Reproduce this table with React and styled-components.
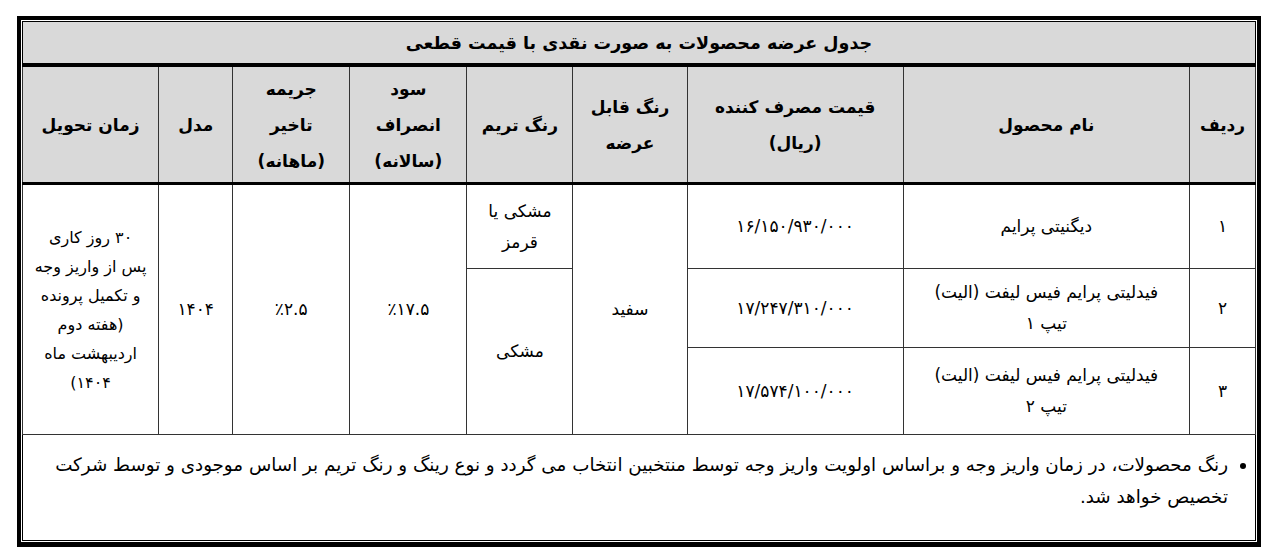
import React from 'react'
import styled, { createGlobalStyle } from 'styled-components'

const GlobalStyle = createGlobalStyle`
  html, body {
    margin: 0;
    padding: 0;
    background: #fff;
  }
  body {
    font-family: "DejaVu Sans", "Liberation Serif", serif;
    color: #000;
  }
`

const Page = styled.div`
  padding: 16px 19px 0 17px;
`

const Frame = styled.div`
  width: 1244px;
  box-sizing: border-box;
  border: 4px solid #000;
  border-bottom-width: 5px;
  padding: 1px;
  background: #fff;
`

const Table = styled.table`
  width: 100%;
  table-layout: fixed;
  border-collapse: collapse;
  border: 1px solid #000;
  direction: rtl;
`

const TitleCell = styled.th`
  height: 41px;
  padding: 0;
  background: #d9d9d9;
  border-bottom: 4px solid #000;
  font-size: 17.5px;
  font-weight: bold;
  text-align: center;
  vertical-align: middle;
`

const HeadCell = styled.th`
  height: 115px;
  padding: 0 4px;
  background: #d9d9d9;
  border: 1px solid #333;
  border-bottom: 3px solid #000;
  font-size: 17px;
  font-weight: bold;
  line-height: 36px;
  text-align: center;
  vertical-align: middle;
`

const Cell = styled.td`
  height: ${p => p.h || 'auto'};
  padding: 0 4px;
  border: 1px solid #333;
  font-size: ${p => p.fs || '17px'};
  line-height: ${p => p.lh || '31px'};
  text-align: center;
  vertical-align: middle;
`

const Num = styled.span`
  letter-spacing: 3px;
`

const NoteCell = styled.td`
  height: 91px;
  padding: 14px 6px 0 6px;
  border-top: 1px solid #333;
  vertical-align: top;
`

const NoteList = styled.ul`
  margin: 0;
  padding: 0 21px 0 0;
  list-style: disc;
  font-size: 18.3px;
  line-height: 32px;
  text-align: right;
`

const widths = [66, 286, 216, 114, 106, 117, 117, 74, 136]

const headers = [
  ['ردیف'],
  ['نام محصول'],
  ['قیمت مصرف کننده', '(ریال)'],
  ['رنگ قابل', 'عرضه'],
  ['رنگ تریم'],
  ['سود', 'انصراف', '(سالانه)'],
  ['جریمه', 'تاخیر', '(ماهانه)'],
  ['مدل'],
  ['زمان تحویل'],
]

const products = [
  { id: '۱', name: ['دیگنیتی پرایم'], price: '۱۶/۱۵۰/۹۳۰/۰۰۰', h: '83px' },
  { id: '۲', name: ['فیدلیتی پرایم فیس لیفت (الیت)', 'تیپ ۱'], price: '۱۷/۲۴۷/۳۱۰/۰۰۰', h: '78px' },
  { id: '۳', name: ['فیدلیتی پرایم فیس لیفت (الیت)', 'تیپ ۲'], price: '۱۷/۵۷۴/۱۰۰/۰۰۰', h: '86px' },
]

const delivery = ['۳۰ روز کاری', 'پس از واریز وجه', 'و تکمیل پرونده', '(هفته دوم', 'اردیبهشت ماه', '۱۴۰۴)']

const Lines = ({ lines }) => lines.map((line, idx) => (
  <React.Fragment key={idx}>
    {idx > 0 && <br />}
    {line}
  </React.Fragment>
))

const App = () => {
  return (
    <Page>
      <GlobalStyle />
      <Frame>
        <Table>
          <colgroup>
            {widths.map((w, idx) => <col key={idx} style={{ width: w }} />)}
          </colgroup>
          <thead>
            <tr>
              <TitleCell colSpan={9}>جدول عرضه محصولات به صورت نقدی با قیمت قطعی</TitleCell>
            </tr>
            <tr>
              {headers.map((h, idx) => (
                <HeadCell key={idx}><Lines lines={h} /></HeadCell>
              ))}
            </tr>
          </thead>
          <tbody>
            {products.map((p, idx) => (
              <tr key={p.id}>
                <Cell h={p.h}>{p.id}</Cell>
                <Cell><Lines lines={p.name} /></Cell>
                <Cell><Num>{p.price}</Num></Cell>
                {idx === 0 && <Cell rowSpan={3}>سفید</Cell>}
                {idx === 0 && <Cell>مشکی یا<br />قرمز</Cell>}
                {idx === 1 && <Cell rowSpan={2}>مشکی</Cell>}
                {idx === 0 && <Cell rowSpan={3}>٪۱۷.۵</Cell>}
                {idx === 0 && <Cell rowSpan={3}>٪۲.۵</Cell>}
                {idx === 0 && <Cell rowSpan={3}><Num>۱۴۰۴</Num></Cell>}
                {idx === 0 && <Cell rowSpan={3} lh="29px" fs="16px"><Lines lines={delivery} /></Cell>}
              </tr>
            ))}
            <tr>
              <NoteCell colSpan={9}>
                <NoteList>
                  <li>
                    رنگ محصولات، در زمان واریز وجه و براساس اولویت واریز وجه توسط منتخبین انتخاب می گردد و نوع رینگ و رنگ تریم بر اساس موجودی و توسط شرکت تخصیص خواهد شد.
                  </li>
                </NoteList>
              </NoteCell>
            </tr>
          </tbody>
        </Table>
      </Frame>
    </Page>
  )
}

export default App
